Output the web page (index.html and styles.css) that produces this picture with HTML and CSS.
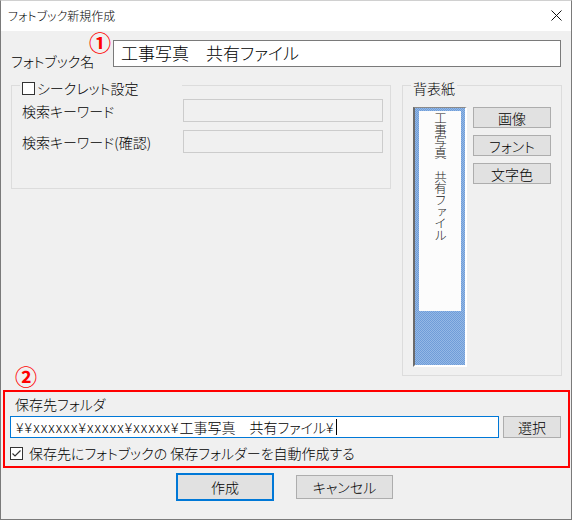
FILE: index.html
```html
<!DOCTYPE html>
<html lang="ja">
<head>
<meta charset="utf-8">
<title>フォトブック新規作成</title>
<link rel="stylesheet" href="styles.css">
</head>
<body>
<div class="window">
  <div class="titlebar">
    <span class="title">フォトブック新規作成</span>
    <svg class="close" width="11" height="11" viewBox="0 0 11 11"><path d="M0.5 0.5 L10.5 10.5 M10.5 0.5 L0.5 10.5" stroke="#111" stroke-width="1" fill="none"/></svg>
  </div>
  <div class="content">
    <div class="name-row">
      <span class="name-label">フォトブック名</span>
      <span class="mark mark1">①</span>
      <div class="name-input">工事写真　共有ファイル</div>
    </div>

    <div class="groups">
      <fieldset class="group secret">
        <legend class="legend legend-check"><span class="cbox"></span>シークレット設定</legend>
        <div class="secret-grid">
          <span class="label">検索キーワード</span>
          <div class="field"></div>
          <span class="label">検索キーワード(確認)</span>
          <div class="field"></div>
        </div>
      </fieldset>

      <fieldset class="group spine-group">
        <legend class="legend">背表紙</legend>
        <div class="spine-row">
          <div class="spine">
            <div class="spine-paper"><span class="spine-text">工事写真　共有ファイル</span></div>
          </div>
          <div class="spine-buttons">
            <button class="btn small">画像</button>
            <button class="btn small">フォント</button>
            <button class="btn small">文字色</button>
          </div>
        </div>
      </fieldset>
    </div>

    <span class="mark mark2">②</span>
    <div class="folder-box">
      <div class="folder-label">保存先フォルダ</div>
      <div class="folder-row">
        <div class="path-input"><span class="ascii">¥¥xxxxxx¥xxxxx¥xxxxx¥</span>工事写真　共有ファイル<span class="ascii">¥</span><span class="caret"></span></div>
        <button class="btn select">選択</button>
      </div>
      <div class="auto-row">
        <svg class="check" width="13" height="13" viewBox="0 0 13 13"><rect x="0.5" y="0.5" width="12" height="12" fill="#fff" stroke="#333"/><path d="M2.5 6.5 L5 9 L10.5 3.5" stroke="#333" stroke-width="1.2" fill="none"/></svg>
        <span class="auto-text">保存先にフォトブックの 保存フォルダーを自動作成する</span>
      </div>
    </div>

    <div class="actions">
      <button class="btn primary">作成</button>
      <button class="btn cancel">キャンセル</button>
    </div>
  </div>
</div>
</body>
</html>
```
FILE: styles.css
```css
* { box-sizing: border-box; }
html, body { margin: 0; padding: 0; }
body {
  font-family: "Noto Sans CJK JP", "Noto Sans", sans-serif;
  font-feature-settings: "palt";
  font-weight: 300;
  color: #000;
  background: #f0f0f0;
}
.window {
  width: 572px;
  height: 520px;
  border: 1px solid #7a7a7a;
  border-top-color: #d0d0d0;
  background: #f0f0f0;
  display: flex;
  flex-direction: column;
}
.titlebar {
  height: 30px;
  background: #fff;
  display: flex;
  align-items: center;
  justify-content: space-between;
  padding: 0 9px 0 7px;
  flex: none;
}
.title { font-size: 12px; line-height: 16px; }
.close { display: block; margin-top: -1px; }
.content { flex: 1; display: flex; flex-direction: column; align-items: flex-start; }

.name-row {
  display: flex;
  height: 27px;
  margin-top: 9px;
  margin-left: 10px;
}
.name-label {
  align-self: flex-end;
  font-size: 14px;
  line-height: 16px;
  margin-bottom: -2px;
  width: 80px;
  flex: none;
  white-space: nowrap;
}
.mark { color: #f00; font-size: 22px; line-height: 22px; font-weight: 700; }
.mark1 { align-self: flex-start; margin-top: -10px; margin-left: -2px; width: 24px; flex: none; }
.name-input {
  width: 448px;
  height: 27px;
  border: 1px solid #7a7a7a;
  background: #fff;
  font-size: 17px;
  line-height: 24px;
  padding-left: 7px;
}

.groups {
  display: flex;
  align-items: flex-start;
  gap: 11px;
  margin-top: 8px;
  margin-left: 10px;
}
.group {
  margin: 0;
  border: 1px solid #dcdcdc;
  padding: 4px 10px 0 10px;
  min-width: 0;
}
.legend {
  font-size: 14px;
  line-height: 14px;
  padding: 6px 2px 0 2px;
  margin-left: -2px;
  display: flex;
  align-items: center;
}
.legend-check { width: 162px; }
.cbox {
  width: 13px;
  height: 13px;
  border: 1px solid #333;
  background: #fff;
  margin-right: 2px;
  flex: none;
}
.secret { width: 380px; height: 114px; }
.secret-grid {
  display: grid;
  grid-template-columns: 161px 200px;
  grid-auto-rows: 23px;
  row-gap: 8px;
  align-items: center;
}
.label { font-size: 14px; line-height: 16px; }
.field {
  height: 23px;
  border: 1px solid #cccccc;
  background: #f0f0f0;
}

.spine-group { width: 160px; height: 301px; padding-top: 12px; }
.spine-row { display: flex; align-items: flex-start; gap: 6px; }
.spine {
  width: 55px;
  height: 260px;
  border-left: 2px solid #6b6b6b;
  border-top: 1px solid #8a8a8a;
  border-right: 2px solid #fff;
  border-bottom: 2px solid #fff;
  background: repeating-conic-gradient(#6f9dd8 0 25%, #94b8e6 0 50%) 0 0 / 2px 2px;
  padding: 3px 4px 0 4px;
}
.spine-paper {
  height: 200px;
  background: #fcfcfc;
  display: flex;
  justify-content: center;
}
.spine-text {
  writing-mode: vertical-rl;
  font-size: 12.5px;
  line-height: 14px;
  letter-spacing: -0.8px;
  color: #222;
  font-feature-settings: normal;
  margin-top: 1px;
}
.spine-buttons { display: flex; flex-direction: column; gap: 7px; }

.btn {
  font-family: inherit;
  font-feature-settings: "palt";
  font-weight: 300;
  background: #e1e1e1;
  border: 1px solid #adadad;
  color: #000;
  padding: 0;
  margin: 0;
  font-size: 14px;
  line-height: 16px;
}
.small { width: 78px; height: 21px; }

.mark2 { display: block; margin-left: 14px; margin-top: -12px; margin-bottom: 4px; }

.folder-box {
  margin-left: 2px;
  width: 567px;
  height: 78px;
  border: 2px solid #f00;
  padding: 4px 0 0 5px;
}
.folder-label { font-size: 14px; line-height: 16px; padding-left: 5px; }
.folder-row { display: flex; gap: 4px; margin-top: 4px; }
.path-input {
  width: 489px;
  height: 22px;
  border: 1px solid #0078d7;
  background: #fff;
  font-size: 14px;
  line-height: 20px;
  padding-left: 5px;
  display: flex;
  align-items: center;
  white-space: pre;
}
.ascii { letter-spacing: 1.1px; }
.caret { display: inline-block; width: 1px; height: 16px; background: #000; margin-left: 1px; }
.select { width: 58px; height: 22px; }
.auto-row { display: flex; align-items: center; gap: 6px; margin-top: 7px; }
.check { display: block; flex: none; }
.auto-text { font-size: 14px; line-height: 16px; }

.actions {
  display: flex;
  align-items: center;
  gap: 22px;
  margin-top: 5px;
  margin-left: 175px;
}
.primary { width: 98px; height: 28px; border: 2px solid #0078d7; }
.cancel { width: 97px; height: 24px; }
```
